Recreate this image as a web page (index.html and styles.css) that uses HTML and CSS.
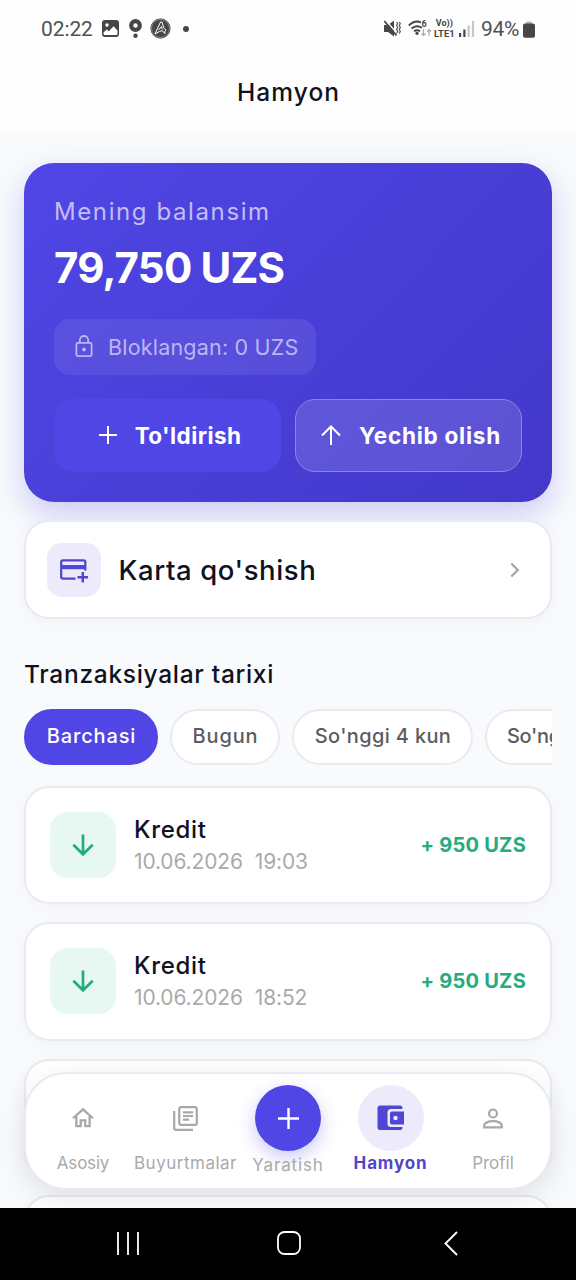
FILE: index.html
```html
<!DOCTYPE html>
<html lang="uz">
<head>
<meta charset="utf-8">
<title>Hamyon</title>
<link rel="stylesheet" href="styles.css">
</head>
<body>
<div class="screen">
  <div class="statusbar">
    <div class="status-left">
      <span class="clock">02:22</span>
      <svg class="ic-photo" width="17" height="17" viewBox="0 0 17 17"><rect width="17" height="17" rx="3" fill="#464646"/><circle cx="5" cy="5" r="1.7" fill="#fff"/><path d="M1.5 12.5l3.2-3 2.2 1.8 4.6-5 4 4.2v3.2q0 1.2-1.200 1.200H2.700q-1.200 0-1.200-1.200z" fill="#fff"/></svg>
      <svg class="ic-pin" width="13" height="20" viewBox="0 0 13 20"><circle cx="6.500" cy="6.500" r="4.300" fill="none" stroke="#464646" stroke-width="4.200"/><circle cx="6.500" cy="16.800" r="2.200" fill="#464646"/></svg>
      <svg class="ic-badge" width="21" height="21" viewBox="0 0 21 21"><circle cx="10.500" cy="10.500" r="9.600" fill="#464646" stroke="#464646"/><circle cx="10.500" cy="10.500" r="9" fill="none" stroke="#aaa" stroke-width=".6"/><path d="M5 16L10.500 4h1.500l1.800 6 2.200 2.200-1.200 1 .2 2.300-3-2.800-2.500.7zM8.500 12l3-3.500.8 3" fill="none" stroke="#fff" stroke-width="1"/></svg>
      <span class="more-dot"></span>
    </div>
    <div class="status-right">
      <svg class="ic-mute" width="17" height="17" viewBox="0 0 17 17"><path d="M0 5h4l6-4.500v16L4 12H0z" fill="#464646"/><path d="M1.500 0L14 14.500" stroke="#fff" stroke-width="1.300"/><path d="M.3 1L12.500 15.500" stroke="#464646" stroke-width="1.800"/><path d="M12.500 2l1.300 1.500-1.300 2 1.300 2-1.300 2 1.300 2-1.300 2M15.300 2l1 1.500-1 2 1 2-1 2 1 2-1 2" fill="none" stroke="#464646" stroke-width="1.100"/></svg>
      <svg class="ic-wifi" width="24" height="19" viewBox="0 0 24 19"><g fill="none" stroke="#464646" stroke-width="1.900"><path d="M.8 6.500Q7 .5 13 3.500"/><path d="M3.500 9.500Q8.500 5.300 14 8.800"/><path d="M6 12.300q3-2.300 6 0"/></g><circle cx="9" cy="14.300" r="1.600" fill="#464646"/><text x="13.500" y="8" class="tiny-six">6</text><path d="M15.500 10v6.500m-2-2l2 2 2-2M21 17v-6.500m-2 2l2-2 2 2" fill="none" stroke="#aaa" stroke-width="1.200"/></svg>
      <div class="volte"><span>Vo))</span><span class="lte">LTE1</span></div>
      <svg class="ic-signal" width="16" height="16" viewBox="0 0 16 16"><path d="M0 12h2.200v4H0zM4.300 8.500h2.200V16H4.300z" fill="#464646"/><path d="M8.600 4.500h2.200V16H8.600zM12.900 0h2.200v16h-2.200z" fill="#c6c6c6"/></svg>
      <span class="percent">94%</span>
      <svg class="ic-battery" width="12" height="17" viewBox="0 0 12 17"><path d="M3 3.500V1.800Q3 .5 4.200.5h3.600Q9 .5 9 1.800v1.700z" fill="#b5b5b5"/><rect y="2.500" width="12" height="14.300" rx="2" fill="#464646"/></svg>
    </div>
  </div>

  <header class="appbar"><h1>Hamyon</h1></header>

  <main class="content">
    <section class="balance">
      <p class="balance-label">Mening balansim</p>
      <p class="balance-amount">79,750 UZS</p>
      <div class="blocked">
        <svg width="18" height="23" viewBox="0 0 18 23"><g fill="none" stroke="currentColor" stroke-width="1.800"><rect x="1.400" y="7.900" width="15.200" height="13.200" rx="1.500"/><path d="M4.800 7.500V5.200a4.200 4.200 0 0 1 8.400 0v2.300"/></g><circle cx="9" cy="14.500" r="1.900" fill="currentColor"/></svg>
        <span>Bloklangan: 0 UZS</span>
      </div>
      <div class="actions">
        <button class="btn btn-fill"><svg width="18" height="18" viewBox="0 0 18 18"><path d="M9 0v18M0 9h18" stroke="#fff" stroke-width="2"/></svg><span class="t-fill">To'ldirish</span></button>
        <button class="btn btn-out"><svg width="20" height="20" viewBox="0 0 20 20"><path d="M10 20V1.500M1 10.500l9-9 9 9" fill="none" stroke="#fff" stroke-width="2"/></svg><span class="t-out">Yechib olish</span></button>
      </div>
    </section>

    <section class="addcard">
      <div class="addcard-icon"><svg width="28" height="24" viewBox="0 0 28 24"><path d="M15.500 19.600H3Q1.200 19.600 1.200 17.800V3Q1.200 1.300 3 1.300h20.500q1.800 0 1.800 1.700v8.500" fill="none" stroke="#4e45c8" stroke-width="2.200"/><path d="M1 6h24.500v4.200H1z" fill="#5046e0"/><path d="M22.800 13v10.500M17.500 18.200H28" stroke="#4e45c8" stroke-width="2.400"/></svg></div>
      <span class="addcard-title">Karta qo'shish</span>
      <svg class="chevron" width="10" height="16" viewBox="0 0 10 16"><path d="M1.300 1.500L7.800 8l-6.500 6.500" fill="none" stroke="#a6a6a6" stroke-width="2.300"/></svg>
    </section>

    <h2 class="history-title">Tranzaksiyalar tarixi</h2>
    <div class="chips">
      <span class="chip chip-active">Barchasi</span>
      <span class="chip chip-today">Bugun</span>
      <span class="chip chip-four">So'nggi 4 kun</span>
      <span class="chip chip-week">So'ng</span>
    </div>

    <div class="list">
      <article class="tx">
        <div class="tx-icon"><svg width="22" height="22" viewBox="0 0 22 22"><path d="M11 .5v19.500M1.300 10.800L11 20.300l9.700-9.500" fill="none" stroke="#24ac7e" stroke-width="2.700"/></svg></div>
        <div class="tx-text"><span class="tx-name">Kredit</span><span class="tx-date"><span>10.06.2026</span><span>19:03</span></span></div>
        <span class="tx-sum">+ 950 UZS</span>
      </article>
      <article class="tx">
        <div class="tx-icon"><svg width="22" height="22" viewBox="0 0 22 22"><path d="M11 .5v19.500M1.300 10.800L11 20.300l9.700-9.500" fill="none" stroke="#24ac7e" stroke-width="2.700"/></svg></div>
        <div class="tx-text"><span class="tx-name">Kredit</span><span class="tx-date"><span>10.06.2026</span><span>18:52</span></span></div>
        <span class="tx-sum">+ 950 UZS</span>
      </article>
      <article class="tx"></article>
      <article class="tx"></article>
    </div>

    <nav class="tabs">
      <a class="tab"><span class="tab-icon"><svg width="22" height="20" viewBox="0 0 24 22"><path d="M1 11.300L12 1.500l11 9.800M4.700 9v11h4.800v-6.500h5V20h4.800V9" fill="none" stroke="#a8a8a8" stroke-width="2.500"/></svg></span><span class="tab-label l-home">Asosiy</span></a>
      <a class="tab"><span class="tab-icon"><svg width="25" height="25" viewBox="0 0 25 25"><g fill="none" stroke="#a8a8a8" stroke-width="2.200"><rect x="6.200" y="1.200" width="17.600" height="17.600" rx="1.800"/><path d="M1.200 5v17q0 1.800 1.800 1.800h17"/><path d="M10 6.300h10M10 10h10M10 13.700h6"/></g></svg></span><span class="tab-label l-orders">Buyurtmalar</span></a>
      <a class="tab"><span class="tab-icon tab-create"><svg width="21" height="21" viewBox="0 0 21 21"><path d="M10.500 0v21M0 10.500h21" stroke="#fff" stroke-width="2.400"/></svg></span><span class="tab-label l-create">Yaratish</span></a>
      <a class="tab"><span class="tab-icon tab-current"><svg width="27" height="26" viewBox="0 0 27 26"><path d="M3 .5h20q2.500 0 2.500 3V4H14q-3.500 0-3.500 3.500v11Q10.500 22 14 22h11.500v.5q0 2.500-2.500 2.500H3Q.5 25 .5 22.500V3Q.5.5 3 .5z" fill="#5046d6"/><path fill-rule="evenodd" d="M15 6.500h12v13H15q-2 0-2-2v-9q0-2 2-2zm3.500 4.300a2.200 2.200 0 1 0 0 4.400 2.200 2.200 0 0 0 0-4.400z" fill="#5046d6"/></svg></span><span class="tab-label l-wallet">Hamyon</span></a>
      <a class="tab"><span class="tab-icon"><svg width="20" height="21" viewBox="0 0 20 21"><g fill="none" stroke="#a8a8a8" stroke-width="2.200"><circle cx="10" cy="5.500" r="4"/><path d="M1.200 19.400v-2.200c0-2.200 4-4 8.800-4s8.800 1.800 8.800 4v2.200z"/></g></svg></span><span class="tab-label l-profile">Profil</span></a>
    </nav>
  </main>

  <div class="sysnav">
    <svg width="22" height="23" viewBox="0 0 22 23"><path d="M1 0v23M11 0v23M21 0v23" stroke="#fff" stroke-width="1.800"/></svg>
    <svg class="sys-home" width="24" height="24" viewBox="0 0 24 24"><rect x="1" y="1" width="22" height="22" rx="6.500" fill="none" stroke="#fff" stroke-width="1.800"/></svg>
    <svg width="14" height="25" viewBox="0 0 14 25"><path d="M13 1L1.500 12.500 13 24" fill="none" stroke="#fff" stroke-width="1.900"/></svg>
  </div>
</div>
</body>
</html>
```
FILE: styles.css
```css
* { box-sizing: border-box; }
body { margin: 0; font-family: Inter, "Open Sans", sans-serif; color: #0f1222; }
p, h1, h2 { margin: 0; }
svg { display: block; flex: none; overflow: visible; }
.screen { width: 576px; height: 1280px; display: flex; flex-direction: column; overflow: hidden; background: #f8fafc; }

.statusbar { height: 57px; flex: none; background: #fefefe; padding: 0 41px; display: flex; justify-content: space-between; align-items: center; font-family: Roboto, sans-serif; color: #505050; }
.status-left, .status-right { display: flex; align-items: center; }
.clock { font-size: 21px; letter-spacing: -.1px; width: 61px; }
.ic-pin { margin-left: 10px; }
.ic-badge { margin-left: 8px; }
.more-dot { width: 6px; height: 6px; border-radius: 50%; background: #464646; margin-left: 12px; }
.ic-wifi { margin-left: 7px; }
.tiny-six { font: 700 9px Roboto, sans-serif; fill: #464646; }
.volte { display: flex; flex-direction: column; align-items: center; width: 21px; margin-left: 2px; font: 700 9px/9.500px Roboto, sans-serif; color: #464646; white-space: nowrap; }
.lte { font-size: 9.500px; }
.ic-signal { margin-left: 4px; }
.percent { font-size: 21px; letter-spacing: -.3px; margin-left: 6px; }
.ic-battery { margin: 2px 0 0 4px; }

.appbar { height: 76px; flex: none; background: #fefefe; display: flex; justify-content: center; padding-top: 19px; }
.appbar h1 { font-size: 24.500px; line-height: 33px; font-weight: 500; letter-spacing: 1.100px; margin-right: -1.100px; }

.content { position: relative; flex: 1; min-height: 0; overflow: hidden; padding: 30px 24px 0; display: flex; flex-direction: column; }
.balance { height: 339px; flex: none; border-radius: 30px; padding: 30px; background: linear-gradient(135deg, #4f46e5, #4338ca); box-shadow: 0 12px 30px rgba(79, 70, 229, .26); color: #fff; display: flex; flex-direction: column; align-items: flex-start; }
.balance-label { font-size: 24px; line-height: 38px; letter-spacing: 1.600px; color: #c2bef5; }
.balance-amount { font-size: 42px; line-height: 60px; font-weight: 700; letter-spacing: -.8px; margin-top: 7px; }
.blocked { width: 262px; height: 56px; margin-top: 21px; border-radius: 16px; background: rgba(255, 255, 255, .08); color: #bbb6f2; display: flex; align-items: center; gap: 15px; padding: 0 0 1px 21px; font-size: 21.500px; font-weight: 400; letter-spacing: .2px; white-space: nowrap; }
.actions { align-self: stretch; margin-top: 24px; display: grid; grid-template-columns: 1fr 1fr; gap: 14px; }
.btn { height: 73px; border: 0; border-radius: 20px; padding: 0 0 1px 5px; color: #fff; font: 700 22.500px Inter, sans-serif; display: flex; align-items: center; justify-content: center; gap: 18px; white-space: nowrap; }
.btn-fill { background: #4f46e5; }
.btn-out { background: rgba(255, 255, 255, .13); border: 1.500px solid #8d84e8; }
.t-fill { letter-spacing: .4px; }
.t-out { letter-spacing: .75px; }

.addcard { height: 99px; flex: none; margin-top: 18px; border: 2px solid #e8ebf2; border-radius: 25px; background: #fff; padding: 0 30px 0 21px; display: flex; align-items: center; box-shadow: 0 4px 18px rgba(30, 41, 59, .035); }
.addcard-icon { width: 54px; height: 54px; border-radius: 15px; background: #eceafb; display: grid; place-items: center; padding-top: 2px; }
.addcard-title { flex: 1; margin-left: 17.500px; font-size: 27.500px; font-weight: 500; letter-spacing: .6px; }

.history-title { margin-top: 36px; font-size: 24.500px; line-height: 38px; font-weight: 500; letter-spacing: .7px; white-space: nowrap; }
.chips { margin-top: 16px; height: 56px; flex: none; display: flex; gap: 12px; overflow: hidden; }
.chip { flex: none; height: 56px; border: 2px solid #e8ebf2; border-radius: 28px; background: #fff; color: #5c5c60; font-size: 20px; font-weight: 500; letter-spacing: .85px; padding: 0 0 2px 1px; display: flex; align-items: center; justify-content: center; }
.chip-active { width: 134px; background: #4f46e5; border-color: #4f46e5; color: #fff; }
.chip-today { width: 110px; }
.chip-four { width: 181px; letter-spacing: .35px; }
.chip-week { width: 181px; letter-spacing: -.3px; justify-content: flex-start; padding-left: 20px; }

.list { margin-top: 20.500px; display: flex; flex-direction: column; gap: 18px; }
.tx { height: 118.500px; flex: none; border: 2px solid #e8ebf2; border-radius: 25px; background: #fff; padding: 0 24px; display: flex; align-items: center; box-shadow: 0 4px 18px rgba(30, 41, 59, .03); }
.tx-icon { width: 66px; height: 66px; border-radius: 18px; background: #e7f7f1; display: grid; place-items: center; }
.tx-text { flex: 1; margin: 2px 0 0 18px; display: flex; flex-direction: column; }
.tx-name { font-size: 24px; line-height: 32px; font-weight: 500; letter-spacing: .7px; }
.tx-date { display: flex; gap: 12px; font-size: 21px; line-height: 32px; font-weight: 400; letter-spacing: -.15px; color: #aaa; }
.tx-sum { font-size: 20px; font-weight: 700; letter-spacing: .25px; color: #24ac7e; }

.tabs { position: absolute; left: 24px; right: 24px; top: 939px; height: 118px; border: 2px solid #e8ebf2; border-radius: 42px; background: #fff; box-shadow: 0 9px 30px rgba(15, 23, 42, .1); padding: 11px 5px 0 5px; display: grid; grid-template-columns: repeat(5, 102.500px); justify-content: center; }
.tab { display: flex; flex-direction: column; align-items: center; }
.tab-icon { width: 66px; height: 66px; border-radius: 50%; display: grid; place-items: center; }
.tab-create { background: #4f46e5; box-shadow: 0 6px 18px rgba(79, 70, 229, .3); }
.tab-current { background: #eceafb; }
.tab-label { font-size: 17px; line-height: 24px; font-weight: 400; color: #aaa; white-space: nowrap; }
.l-home { letter-spacing: -.2px; }
.l-orders { letter-spacing: .5px; }
.l-create { letter-spacing: .85px; margin-top: 2px; }
.l-wallet { letter-spacing: .85px; font-weight: 700; color: #5046c8; }
.l-profile { letter-spacing: 0; }

.sysnav { height: 72px; flex: none; background: #000; display: flex; justify-content: space-between; align-items: center; padding: 0 118px 2px 117px; }
.sys-home { margin-right: 6px; }
```
